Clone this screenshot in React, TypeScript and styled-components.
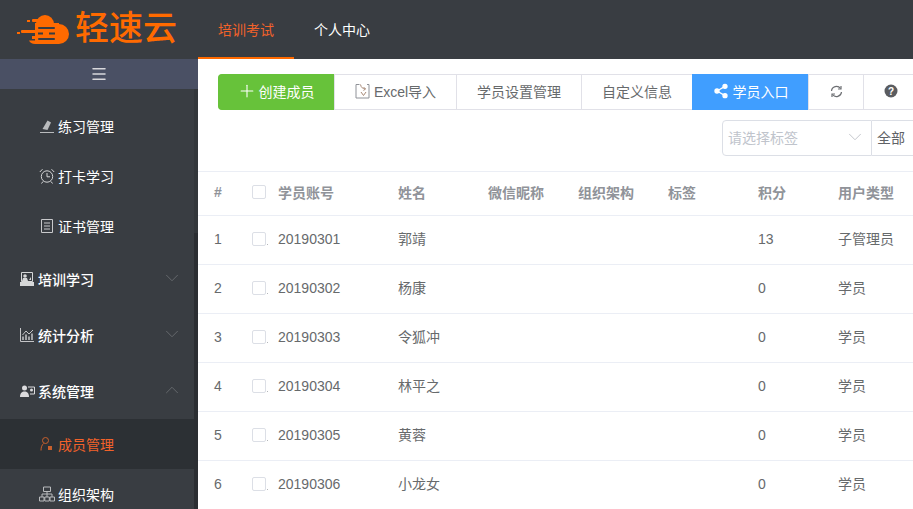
import React from 'react';
import styled, { createGlobalStyle } from 'styled-components';
import { Plus, ChevronDown, ChevronUp, Menu as MenuIcon, Share2 } from 'lucide-react';

const Global = createGlobalStyle`
  html, body { margin: 0; padding: 0; height: 100%; overflow: hidden; background: #fff; }
  body { font-family: "Liberation Sans", "Noto Sans CJK SC", sans-serif; font-size: 14px; color: #676a6c; }
  #root { height: 100%; }
`;

const Page = styled.div`width: 913px; height: 509px; display: flex; flex-direction: column; overflow: hidden;`;
const Header = styled.header`height: 59px; flex: none; background: #393d42; display: flex;`;
const Logo = styled.div`width: 198px; display: flex; align-items: center; padding-left: 17px; box-sizing: border-box; gap: 5px; flex: none;`;
const LogoText = styled.span`color: #ff6a00; font-size: 34px; font-weight: 500; line-height: 1; white-space: nowrap; margin-top: -3px;`;
const HeadTab = styled.div<{ $active?: boolean }>`
  width: 96px; height: 59px; box-sizing: border-box; display: flex; align-items: center; justify-content: center;
  font-size: 14px; color: ${p => (p.$active ? '#f2622a' : '#fff')};
  border-bottom: 2px solid ${p => (p.$active ? '#ff6a00' : 'transparent')};
`;
const Main = styled.div`flex: 1; display: flex; min-height: 0;`;
const Sidebar = styled.aside`width: 198px; flex: none; display: flex; flex-direction: column; background: #393d42; overflow: hidden;`;
const Toggle = styled.div`height: 30px; flex: none; background: #4a5064; display: flex; align-items: center; justify-content: center; color: #d8d8dc;`;
const SideBody = styled.div`flex: 1; position: relative; min-height: 0; overflow: hidden; padding: 12px 4px 0 0;`;
const Track = styled.div`position: absolute; right: 0; top: 0; bottom: 0; width: 4px; background: #33373b;`;
const Thumb = styled.div`position: absolute; right: 0; top: 144px; bottom: 0; width: 4px; background: #2b2e32;`;
const SubItem = styled.div<{ $active?: boolean }>`
  height: 50px; display: flex; align-items: center; padding-left: 39px; gap: 3px; font-size: 14px;
  color: ${p => (p.$active ? '#f2622a' : '#fff')}; background: ${p => (p.$active ? '#2c3034' : 'transparent')};
  svg { flex: none; }
`;
const GroupItem = styled.div`
  height: 56px; display: flex; align-items: center; padding-left: 19px; gap: 3px; font-size: 14px; color: #fff; font-weight: 500;
  svg { flex: none; }
  .chev { margin-left: auto; margin-right: 11px; margin-top: -3px; color: #6d7175; }
`;
const Content = styled.main`flex: 1; min-width: 0; overflow: hidden; background: #fff; padding-top: 15px;`;
const Toolbar = styled.div`display: flex; margin-left: 20px; height: 36px; width: 720px;`;
const ToolBtn = styled.div<{ $w: number; $kind?: 'green' | 'blue'; $gap?: number }>`
  width: ${p => p.$w}px; flex: none; box-sizing: border-box; display: flex; align-items: center; justify-content: center; gap: ${p => p.$gap ?? 4}px;
  font-size: 14px; white-space: nowrap; padding-bottom: 2px;
  color: ${p => (p.$kind ? '#fff' : '#676a6c')};
  background: ${p => (p.$kind === 'green' ? '#67c23a' : p.$kind === 'blue' ? '#409eff' : '#fff')};
  border: 1px solid ${p => (p.$kind === 'green' ? '#67c23a' : p.$kind === 'blue' ? '#409eff' : '#e1e1e8')};
  border-right-width: 0;
  &:first-child { border-radius: 4px 0 0 4px; }
  &:last-child { border-right-width: 1px; }
`;
const AddIcon = styled(Plus)`margin: 0 2px 0 -2px; flex: none;`;
const FilterRow = styled.div`display: flex; margin: 10px 0 0 524px; height: 36px; width: 300px;`;
const SelectBox = styled.div`
  width: 150px; box-sizing: border-box; border: 1px solid #dcdfe6; border-radius: 4px 0 0 4px; display: flex; align-items: center;
  padding: 0 5px 3px 5px; justify-content: space-between; color: #c0c4cc; font-size: 14px;
`;
const AllLabel = styled.div`width: 60px; box-sizing: border-box; border: 1px solid #dcdfe6; border-left: 0; display: flex; align-items: center; padding: 0 0 3px 5px; color: #606266; font-size: 14px;`;
const Table = styled.div`margin-top: 15px; border-top: 1px solid #ebeef5;`;
const Row = styled.div<{ $head?: boolean }>`
  display: grid; grid-template-columns: 54px 26px 120px 90px 90px 90px 90px 80px 75px;
  height: ${p => (p.$head ? 44 : 49)}px; box-sizing: border-box; align-items: center; border-bottom: 1px solid #ebeef5;
  padding-bottom: ${p => (p.$head ? 3 : 2)}px;
  color: ${p => (p.$head ? '#909399' : '#676a6c')}; font-weight: ${p => (p.$head ? 700 : 400)}; font-size: 14px; white-space: nowrap;
`;
const Num = styled.div`padding-left: 16px;`;
const Check = styled.span<{ $dot?: boolean }>`
  display: block; position: relative; width: 14px; height: 14px; box-sizing: border-box; border: 1px solid #dcdfe6; border-radius: 2px; background: #fff;
  ${p => p.$dot ? `&::after { content: ""; position: absolute; left: 14px; bottom: 0; width: 1px; height: 1px; background: #b5b7ba; }` : ''}
`;
const Cell = styled.div``;
const CjkCell = styled.div`padding-bottom: 2px;`;

const ic = { fill: 'none', stroke: 'currentColor' } as const;
const Cloud = () => (
  <svg width="53" height="29" viewBox="0 0 53 29">
    <g fill="#ff6a00">
      <circle cx="28" cy="9" r="9" />
      <circle cx="42" cy="19" r="10" />
      <rect x="18" y="8" width="24" height="21" />
      <path d="M18 29c-3 0-5-1.500-6-3.500h10V29z" />
      <rect x="15" y="21" width="8" height="3" />
      <rect x="4" y="15" width="17" height="3" rx="1" />
      <rect x="0" y="17" width="3" height="2" />
      <rect x="10" y="5" width="3" height="2" />
      <rect x="15" y="4" width="8" height="3" rx="1" />
    </g>
    <g fill="#393d42">
      <rect x="21" y="12" width="17" height="2" rx="1" /><rect x="21" y="17.500" width="5" height="2" /><rect x="32" y="17.500" width="6" height="2" /><rect x="21" y="23" width="17" height="2" rx="1" />
      <rect x="14" y="19" width="4" height="1.500" />
    </g>
  </svg>
);
const Pen = () => (<svg width="16" height="16" viewBox="0 0 16 16" fill="#b9bbbd"><path d="M3.500 11 8.500 2.500l3.500 2-3.500 7.500z" /><path d="M1 14h14v1H1z" /></svg>);
const Alarm = () => (<svg width="16" height="16" viewBox="0 0 16 16" {...ic} color="#d4d5d6"><circle cx="8" cy="8.500" r="5.700" /><path d="M8 5v3.800h3M.800 4 3.500 1.200M15.200 4l-2.700-2.800M4 13.500l-1.500 2M12 13.500l1.500 2" /></svg>);
const Cert = () => (<svg width="16" height="16" viewBox="0 0 16 16" {...ic} color="#c8c9cb"><path d="M2.500 1.500h11v13h-11zM5 5h6M5 8h6M5 11h6" /></svg>);
const Board = () => (<svg width="16" height="16" viewBox="0 0 16 16" color="#d6d7d8"><path d="M2.500 1.500h11v9h-11z" fill="none" stroke="currentColor" /><circle cx="6" cy="5" r="1.800" fill="currentColor" /><path d="M3 10l1-3h4l1 3zM10 9l2-3v3zM1 11h14v4H1z" fill="currentColor" /></svg>);
const ChartI = () => (<svg width="16" height="16" viewBox="0 0 16 16" {...ic} color="#c4c5c7"><path d="M1.500 1v13.500H15" /><path d="M4 13V9.500M7 13V7.500M10 13V9.500M13 13V6.500" strokeWidth="1.500" /><path d="M3.500 8 7 4l3 3 4-4" /></svg>);
const Users = () => (<svg width="16" height="16" viewBox="0 0 16 16" color="#dcdcde"><circle cx="5.500" cy="5" r="2.500" fill="currentColor" /><path d="M1 14c0-4 2-5.500 4.500-5.500S10 10 10 14z" fill="currentColor" /><path d="M9 4h6.500v7H11" fill="none" stroke="currentColor" /><circle cx="12.500" cy="7" r="1.500" fill="currentColor" /></svg>);
const Member = () => (<svg width="16" height="16" viewBox="0 0 16 16" color="#c8602c" fill="none" stroke="currentColor"><circle cx="6.500" cy="4.500" r="3" /><path d="M4.500 7.500c-1.500 1.500-2.500 3.500-2.500 7" /><rect x="9" y="10" width="4" height="4" fill="currentColor" stroke="none" /></svg>);
const Org = () => (<svg width="16" height="16" viewBox="0 0 16 16" {...ic} color="#b9bbbd"><path d="M4.500 1h7v4.500h-7zM.5 11h4.500v4H.5zM5.800 11h4.500v4H5.800zM11 11h4.500v4H11zM3 11V8h10v3M8 5.500V11" /></svg>);
const ExcelI = () => (<svg width="15" height="15" viewBox="0 0 15 15" fill="none"><path d="M4.500 .5H1v13.500h13V.5h-2" stroke="#8f9298" /><path d="M5.500 .5c.5 3 2.500 4.500 5 4.500M10.500 5 8.500 3M10.500 5l-2 1.500M6 8l2.500 3.500L11 8" stroke="#a88a78" /></svg>);
const Sync = () => (<svg width="13" height="13" viewBox="0 0 13 13" fill="none" stroke="#6c6e72" strokeWidth="1.200"><path d="M1.500 6A5 5 0 0 1 10.500 3.500" /><path d="M11.500 7A5 5 0 0 1 2.500 9.500" /><path d="M11 1v3H8" /><path d="M2 12V9h3" /></svg>);
const Help = () => (<svg width="14" height="14" viewBox="0 0 14 14"><circle cx="7" cy="7" r="6.500" fill="#5a5c60" /><text x="7" y="10.500" textAnchor="middle" fontSize="10" fontWeight="700" fill="#fff" fontFamily="Liberation Sans">?</text></svg>);

const rows = [
  ['1', '20190301', '郭靖', '13', '子管理员'],
  ['2', '20190302', '杨康', '0', '学员'],
  ['3', '20190303', '令狐冲', '0', '学员'],
  ['4', '20190304', '林平之', '0', '学员'],
  ['5', '20190305', '黄蓉', '0', '学员'],
  ['6', '20190306', '小龙女', '0', '学员'],
];

export default function App() {
  return (
    <Page>
      <Global />
      <Header>
        <Logo><Cloud /><LogoText>轻速云</LogoText></Logo>
        <HeadTab $active>培训考试</HeadTab>
        <HeadTab>个人中心</HeadTab>
      </Header>
      <Main>
        <Sidebar>
          <Toggle><MenuIcon size={18} strokeWidth={2} /></Toggle>
          <SideBody>
            <Track /><Thumb />
            <SubItem><Pen />练习管理</SubItem>
            <SubItem><Alarm />打卡学习</SubItem>
            <SubItem><Cert />证书管理</SubItem>
            <GroupItem><Board />培训学习<ChevronDown className="chev" size={22} strokeWidth={0.9} /></GroupItem>
            <GroupItem><ChartI />统计分析<ChevronDown className="chev" size={22} strokeWidth={0.9} /></GroupItem>
            <GroupItem><Users />系统管理<ChevronUp className="chev" size={22} strokeWidth={0.9} /></GroupItem>
            <SubItem $active><Member />成员管理</SubItem>
            <SubItem><Org />组织架构</SubItem>
          </SideBody>
        </Sidebar>
        <Content>
          <Toolbar>
            <ToolBtn $w={116} $kind="green" $gap={0}><AddIcon size={20} strokeWidth={1.3} />创建成员</ToolBtn>
            <ToolBtn $w={122}><ExcelI />Excel导入</ToolBtn>
            <ToolBtn $w={125}>学员设置管理</ToolBtn>
            <ToolBtn $w={111}>自定义信息</ToolBtn>
            <ToolBtn $w={116} $kind="blue"><Share2 size={16} fill="#fff" strokeWidth={2} />学员入口</ToolBtn>
            <ToolBtn $w={55}><Sync /></ToolBtn>
            <ToolBtn $w={55}><Help /></ToolBtn>
          </Toolbar>
          <FilterRow>
            <SelectBox>请选择标签<ChevronDown size={22} strokeWidth={0.9} color="#b8bbc2" /></SelectBox>
            <AllLabel>全部</AllLabel>
          </FilterRow>
          <Table>
            <Row $head>
              <Num>#</Num><Check /><Cell>学员账号</Cell><Cell>姓名</Cell><Cell>微信昵称</Cell><Cell>组织架构</Cell><Cell>标签</Cell><Cell>积分</Cell><Cell>用户类型</Cell>
            </Row>
            {rows.map(r => (
              <Row key={r[0]}>
                <Num>{r[0]}</Num><Check $dot /><Cell>{r[1]}</Cell><CjkCell>{r[2]}</CjkCell><Cell /><Cell /><Cell /><Cell>{r[3]}</Cell><CjkCell>{r[4]}</CjkCell>
              </Row>
            ))}
          </Table>
        </Content>
      </Main>
    </Page>
  );
}
